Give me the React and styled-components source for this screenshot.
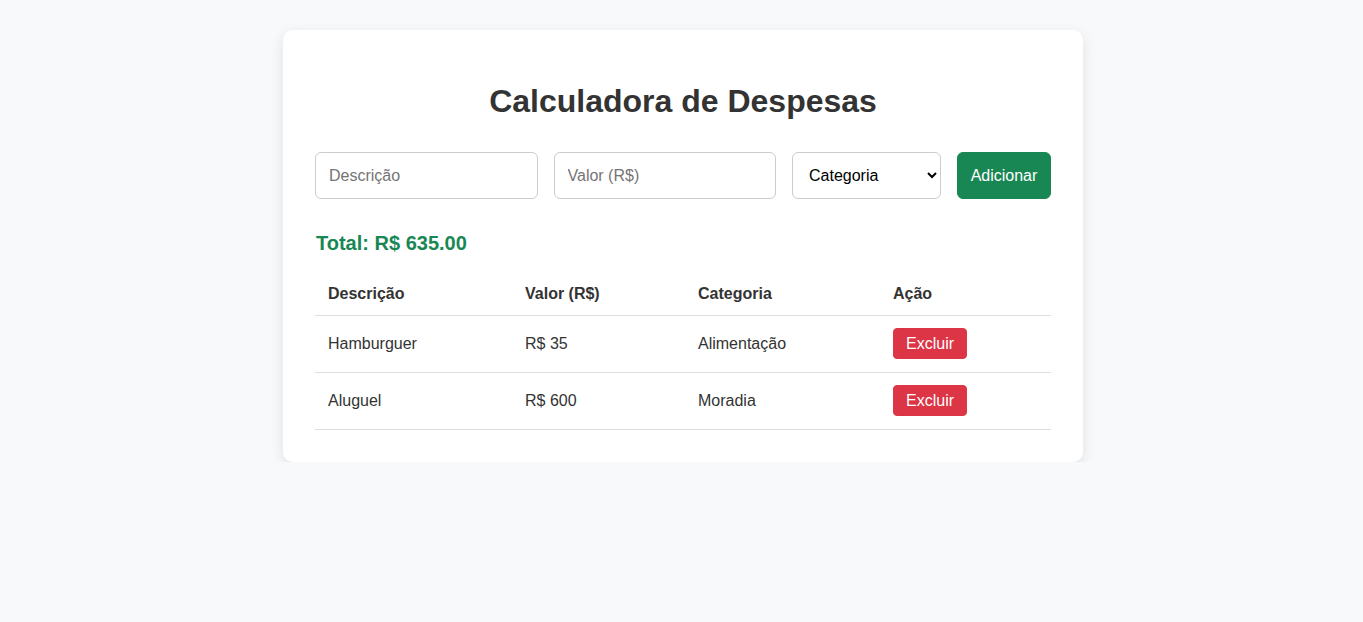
import { useState } from "react";
import styled, { createGlobalStyle } from "styled-components";

const GlobalStyle = createGlobalStyle`
  body {
    margin: 0;
    background: #f8f9fa;
    font-family: "Liberation Sans", Arial, sans-serif;
    color: #333;
  }
`;

const Page = styled.div`
  padding: 30px 0 0 3px;
  display: flex;
  justify-content: center;
`;

const Card = styled.div`
  width: 800px;
  box-sizing: border-box;
  background: #fff;
  border-radius: 10px;
  box-shadow: 0 4px 14px rgba(0, 0, 0, 0.1);
  padding: 32px;
`;

const Title = styled.h1`
  font-size: 32px;
  font-weight: bold;
  text-align: center;
  margin: 21px 0 32px;
  line-height: 37px;
  color: #333;
`;

const Form = styled.div`
  display: flex;
  gap: 16px;
  align-items: center;
`;

const Field = styled.input`
  flex: 1;
  min-width: 0;
  height: 47px;
  box-sizing: border-box;
  padding: 0 13px;
  border: 1px solid #ccc;
  border-radius: 6px;
  font-family: inherit;
  font-size: 16px;
  color: #333;
  &::placeholder { color: #757575; }
`;

const Select = styled.select`
  width: 149px;
  height: 47px;
  box-sizing: border-box;
  padding: 0 12px;
  border: 1px solid #ccc;
  border-radius: 6px;
  background: #fff;
  font-family: inherit;
  font-size: 16px;
  color: #000;
`;

const Button = styled.button`
  border: 1px solid ${(p) => (p.$danger ? "#dc3545" : "#198754")};
  background: ${(p) => (p.$danger ? "#dc3545" : "#198754")};
  color: #fff;
  font-family: inherit;
  font-size: 16px;
  border-radius: ${(p) => (p.$danger ? "4px" : "6px")};
  height: ${(p) => (p.$danger ? "31px" : "47px")};
  min-width: ${(p) => (p.$danger ? "74px" : "94px")};
  padding: 0 12px;
  cursor: pointer;
`;

const Total = styled.h2`
  color: #198754;
  font-size: 20px;
  font-weight: bold;
  line-height: 23px;
  margin: 33px 0 18px 1px;
`;

const Table = styled.table`
  width: 100%;
  border-collapse: collapse;
  table-layout: fixed;
`;

const Th = styled.th`
  box-sizing: border-box;
  text-align: left;
  font-weight: bold;
  font-size: 16px;
  padding: 12px 13px;
  border-bottom: 1px solid #ddd;
  width: ${(p) => p.$w}px;
  color: #333;
`;

const Td = styled.td`
  font-size: 16px;
  padding: 12px 13px 13px;
  border-bottom: 1px solid #ddd;
  height: 31px;
  color: #333;
`;

const initial = [
  { id: 1, desc: "Hamburguer", valor: 35, cat: "Alimentação" },
  { id: 2, desc: "Aluguel", valor: 600, cat: "Moradia" },
];

export default function App() {
  const [items, setItems] = useState(initial);
  const total = items.reduce((s, i) => s + i.valor, 0);

  return (
    <>
      <GlobalStyle />
      <Page>
        <Card>
          <Title>Calculadora de Despesas</Title>
          <Form>
            <Field placeholder="Descrição" />
            <Field placeholder="Valor (R$)" type="number" />
            <Select defaultValue="">
              <option value="">Categoria</option>
              <option>Alimentação</option>
              <option>Moradia</option>
              <option>Transporte</option>
            </Select>
            <Button>Adicionar</Button>
          </Form>
          <Total>Total: R$ {total.toFixed(2)}</Total>
          <Table>
            <thead>
              <tr>
                <Th $w={197}>Descrição</Th>
                <Th $w={173}>Valor (R$)</Th>
                <Th $w={195}>Categoria</Th>
                <Th $w={171}>Ação</Th>
              </tr>
            </thead>
            <tbody>
              {items.map((i) => (
                <tr key={i.id}>
                  <Td>{i.desc}</Td>
                  <Td>R$ {i.valor}</Td>
                  <Td>{i.cat}</Td>
                  <Td>
                    <Button $danger onClick={() => setItems(items.filter((x) => x.id !== i.id))}>
                      Excluir
                    </Button>
                  </Td>
                </tr>
              ))}
            </tbody>
          </Table>
        </Card>
      </Page>
    </>
  );
}
